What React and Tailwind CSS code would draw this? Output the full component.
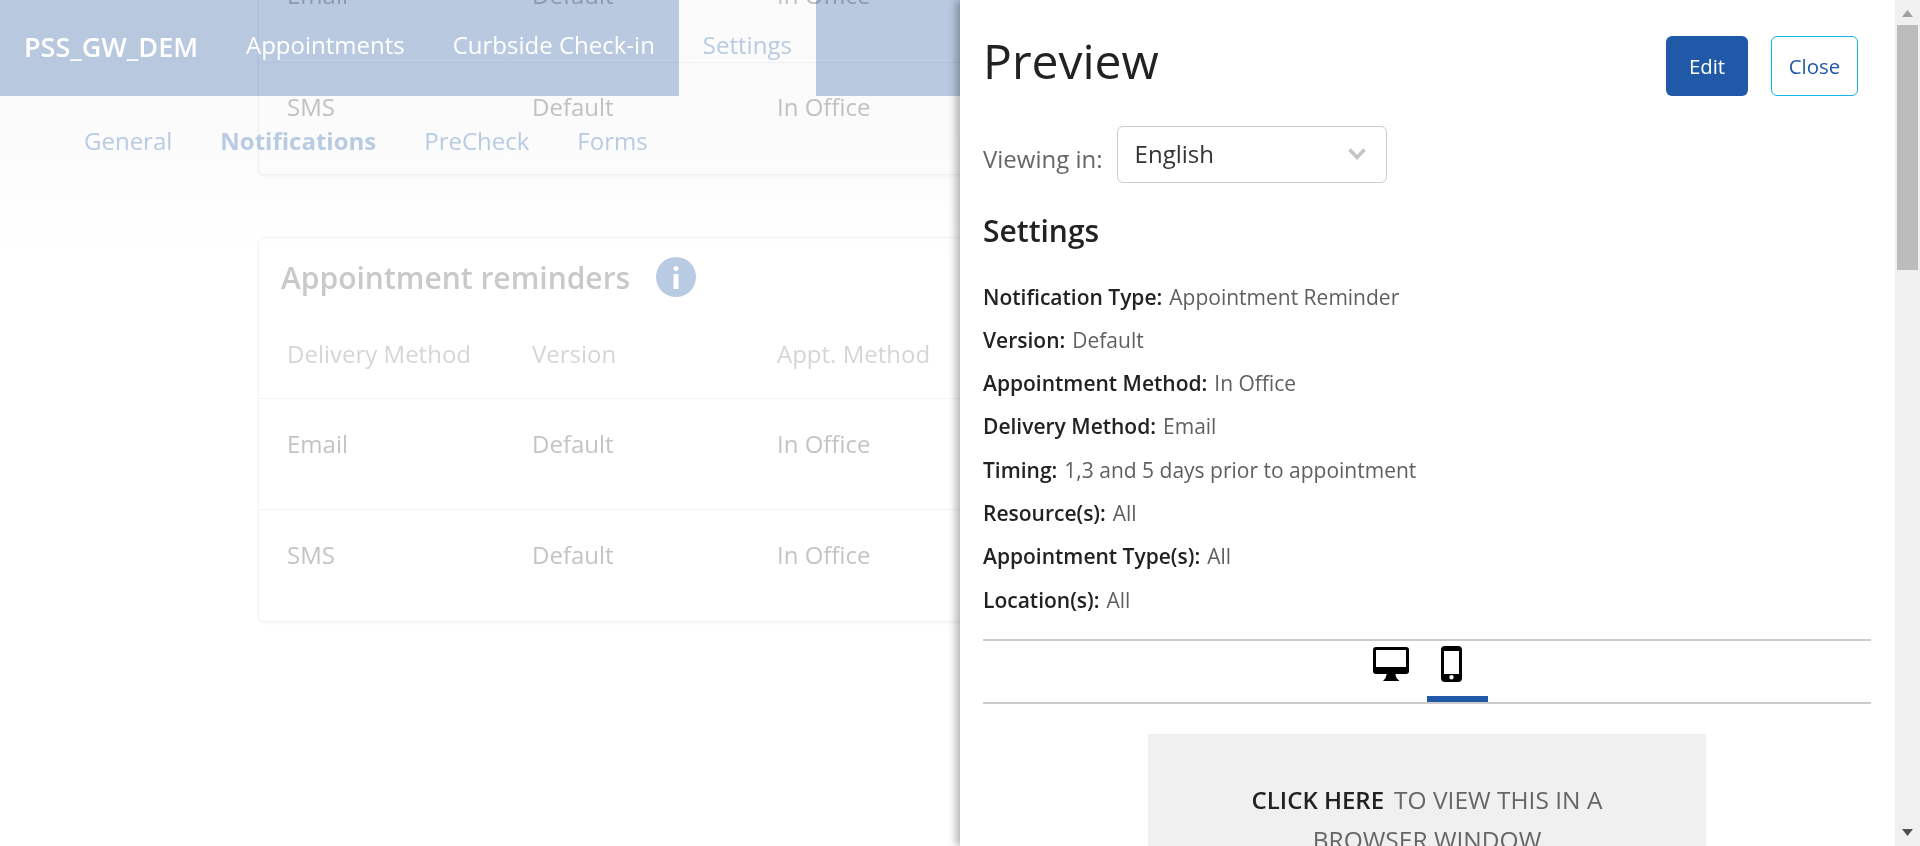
const font = "font-['Open_Sans',sans-serif]";

function Card({ children }) {
  return (
    <div className="ml-[258px] w-[900px] rounded-[6px] border border-[#f3f3f3] shadow-[0_2px_3px_rgba(0,0,0,0.03)] bg-white">
      {children}
    </div>
  );
}

function Row({ cells, border = true, height = "h-[111px]", color = "text-[#c4c4c4]", pt = "pt-[31px]" }) {
  return (
    <div className={`grid grid-cols-[245px_245px_1fr] pl-[28px] text-[24px] leading-[28px] ${height} ${pt} ${color} ${border ? "border-b border-[#f4f4f4]" : ""}`}>
      {cells.map((c, i) => <div key={i}>{c}</div>)}
    </div>
  );
}

function Band({ color = "bg-[#bccce4]" }) {
  return <span className={`absolute inset-0 mix-blend-multiply ${color}`} />;
}

function Background() {
  return (
    <div className="relative w-[960px] h-[846px] overflow-hidden bg-white shrink-0">
      <div className="-mt-[50px]">
        <Card>
          <Row cells={["Email", "Default", "In Office"]} height="h-[112px]" pt="pt-[30px]" />
          <Row cells={["SMS", "Default", "In Office"]} border={false} pt="pt-[30px]" />
        </Card>
        <div className="h-[62px]" />
        <Card>
          <div className="flex items-center h-[80px] pb-[2px] pl-[22px] gap-[26px]">
            <h2 className="text-[30px] font-semibold text-[#c9c9c9]">Appointment reminders</h2>
            <span className="flex items-center justify-center w-[40px] h-[40px] rounded-full bg-[#b9cbe3]">
              <svg width="8" height="24" viewBox="0 0 8 24" fill="#fff"><circle cx="4" cy="3.5" r="2.5" /><rect x="1.5" y="9" width="5" height="15" /></svg>
            </span>
          </div>
          <Row cells={["Delivery Method", "Version", "Appt. Method"]} height="h-[81px]" color="text-[#d6d6d6]" pt="pt-[22px]" />
          <Row cells={["Email", "Default", "In Office"]} />
          <Row cells={["SMS", "Default", "In Office"]} border={false} />
        </Card>
      </div>

      <div className="absolute top-0 left-0 right-0 h-[256px] bg-gradient-to-b from-[#fbfbfb] via-[#fbfbfb] to-white mix-blend-multiply" />

      <nav className="absolute top-0 left-0 right-0 flex h-[96px] text-[24px] text-white">
        <div className="relative flex items-center w-[222px] pl-[24px] pb-[2px] font-semibold text-[27px]">
          <Band color="bg-[#bbcbe3]" />
          <span className="relative">PSS_GW_DEM</span>
        </div>
        <div className="relative flex items-center px-[24px] pb-[6px] gap-[48px]">
          <Band />
          <span className="relative">Appointments</span>
          <span className="relative">Curbside Check-in</span>
        </div>
        <div className="flex items-center px-[24px] pb-[6px] text-[#b9cbe3]">Settings</div>
        <div className="relative flex-1"><Band /></div>
      </nav>

      <div className="absolute top-[127px] left-[84px] flex gap-[48px] text-[24px] leading-[28px] text-[#b9cbe3]">
        <span>General</span>
        <span className="font-bold">Notifications</span>
        <span>PreCheck</span>
        <span>Forms</span>
      </div>
    </div>
  );
}

function Desktop() {
  return (
    <svg width="36" height="34" viewBox="0 0 36 34">
      <path fillRule="evenodd" d="M3 0h30a3 3 0 0 1 3 3v21a3 3 0 0 1-3 3H3a3 3 0 0 1-3-3V3a3 3 0 0 1 3-3zM3 3v17h30V3z" fill="#000" />
      <path d="M14 26h8l1.500 5 3 3H10l2.500-3z" fill="#000" />
    </svg>
  );
}

function Phone() {
  return (
    <svg width="21" height="36" viewBox="0 0 21 36">
      <path fillRule="evenodd" d="M4 0h13a4 4 0 0 1 4 4v28a4 4 0 0 1-4 4H4a4 4 0 0 1-4-4V4a4 4 0 0 1 4-4zM3 5v23h15V5zM10.500 29a2.200 2.200 0 1 0 0 4.400 2.200 2.200 0 0 0 0-4.400z" fill="#000" />
    </svg>
  );
}

const settings = [
  ["Notification Type:", "Appointment Reminder"],
  ["Version:", "Default"],
  ["Appointment Method:", "In Office"],
  ["Delivery Method:", "Email"],
  ["Timing:", "1,3 and 5 days prior to appointment"],
  ["Resource(s):", "All"],
  ["Appointment Type(s):", "All"],
  ["Location(s):", "All"],
];

function Panel() {
  return (
    <div className="relative z-10 flex-1 h-[846px] flex bg-white shadow-[-4px_0_8px_rgba(0,0,0,0.3)]">
      <div className="flex-1 overflow-hidden pl-[23px] pr-[24px]">
        <div className="flex items-start justify-between pt-[36px] pr-[13px]">
          <h1 className="text-[48px] leading-[52px] -mt-[1px] text-[#222]">Preview</h1>
          <div className="flex gap-[23px]">
            <button className="w-[82px] h-[60px] rounded-[6px] bg-[#2159a9] text-white text-[20.400px]">Edit</button>
            <button className="w-[87px] h-[60px] rounded-[6px] border border-[#12b5ea] text-[#2159a9] text-[20.400px]">Close</button>
          </div>
        </div>
        <div className="flex items-center gap-[14px] mt-[30px]">
          <span className="text-[24px] leading-[32px] text-[#666] mt-[9px]">Viewing in:</span>
          <div className="flex items-center justify-between w-[270px] h-[57px] pl-[17px] pr-[20px] pb-[2px] rounded-[6px] border border-[#ccc] text-[24px] text-[#333]">
            <span>English</span>
            <svg width="18" height="12" viewBox="0 0 18 12" fill="none" stroke="#c4c4c4" strokeWidth="3.500"><path d="M1.500 1.500 9 9.500l7.500-8" /></svg>
          </div>
        </div>
        <h2 className="mt-[30px] text-[30px] leading-[36px] font-semibold text-[#222]">Settings</h2>
        <div className="mt-[26.500px] text-[21px] leading-[43.300px]">
          {settings.map(([k, v]) => (
            <div key={k} className="flex gap-[7px] items-baseline">
              <span className="font-semibold text-[#222]">{k}</span>
              <span className="text-[#5f5f5f]">{v}</span>
            </div>
          ))}
        </div>
        <div className="mt-[17.500px] h-[65px] border-y-2 border-[#ccc] flex justify-center gap-[32px] pr-[20px]">
          <div className="pt-[6px]"><Desktop /></div>
          <div className="relative pt-[5px]">
            <Phone />
            <span className="absolute left-[-14px] bottom-0 w-[61px] h-[6px] bg-[#2159a9]" />
          </div>
        </div>
        <div className="mt-[30px] ml-[165px] w-[558px] h-[300px] bg-[#f0f0f0] pt-[46px] text-center text-[24.500px] leading-[40px] text-[#666]">
          <span className="font-semibold text-[#222] text-[24px]">CLICK HERE</span>
          <span className="ml-[10px]">TO VIEW THIS IN A</span>
          <br />
          BROWSER WINDOW
        </div>
      </div>
      <div className="relative w-[25px] h-full shrink-0 bg-[#f0f0f0] pl-[2px] pt-[25px]">
        <svg className="absolute top-[10px] left-[7px]" width="11" height="7" viewBox="0 0 11 7"><path d="M5.500 0 11 7H0z" fill="#a0a0a0" /></svg>
        <div className="w-[21px] h-[245px] bg-[#bcbcbc]" />
        <svg className="absolute bottom-[10px] left-[7px]" width="11" height="7" viewBox="0 0 11 7"><path d="M0 0h11L5.500 7z" fill="#505050" /></svg>
      </div>
    </div>
  );
}

export default function App() {
  return (
    <div className={`flex w-[1920px] h-[846px] overflow-hidden ${font}`}>
      <Background />
      <Panel />
    </div>
  );
}
